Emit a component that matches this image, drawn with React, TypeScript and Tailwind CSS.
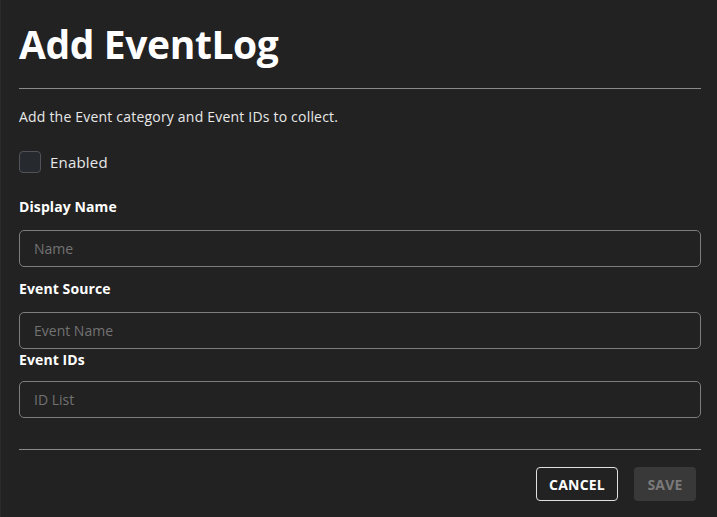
import React from "react";

export default function App() {
  const font = { fontFamily: '"Open Sans", "Noto Sans", sans-serif' };
  return (
    <div className="w-[717px] h-[517px] bg-[#222222] text-white overflow-hidden border-l border-[#2c2c2c]" style={font}>
      <div className="pl-[18px] pr-[16px]">
        <h1 className="text-[39px] font-bold leading-none pt-[24px] h-[88px] tracking-[-0.4px]">Add EventLog</h1>
        <div className="h-px bg-[#8a8a8a]" />
        <p className="text-[14px] text-[#e8e8e8] mt-[19px] leading-[18px] tracking-[0.2px]">Add the Event category and Event IDs to collect.</p>
        <label className="flex items-center gap-[9px] mt-[25px] h-[22px]">
          <span className="w-[22px] h-[22px] rounded-[4px] border border-[#505458] bg-[#262a2e]" />
          <span className="text-[15px] text-[#e8e8e8] tracking-[0.2px]">Enabled</span>
        </label>
        <div className="text-[14px] font-bold mt-[25px] leading-[18px] tracking-[0.1px]">Display Name</div>
        <input
          placeholder="Name"
          className="mt-[14px] block w-full h-[37px] rounded-[5px] border border-[#7d7d7d] bg-transparent px-[14px] text-[14px] placeholder:text-[#727272] outline-none"
          style={font}
        />
        <div className="text-[14px] font-bold mt-[13px] leading-[18px] tracking-[0.1px]">Event Source</div>
        <input
          placeholder="Event Name"
          className="mt-[14px] block w-full h-[37px] rounded-[5px] border border-[#7d7d7d] bg-transparent px-[14px] text-[14px] placeholder:text-[#727272] outline-none"
          style={font}
        />
        <div className="text-[14px] font-bold mt-[2px] leading-[18px] tracking-[0.1px]">Event IDs</div>
        <input
          placeholder="ID List"
          className="mt-[12px] block w-full h-[37px] rounded-[5px] border border-[#7d7d7d] bg-transparent px-[14px] text-[14px] placeholder:text-[#727272] outline-none"
          style={font}
        />
        <div className="h-px bg-[#8a8a8a] mt-[31px]" />
        <div className="flex justify-end gap-[16px] mt-[17px] pr-[5px]">
          <button className="w-[82px] h-[34px] rounded-[4px] border border-[#e0e0e0] text-[14px] font-bold text-white tracking-[0.2px]" style={font}>CANCEL</button>
          <button className="w-[62px] h-[34px] rounded-[4px] bg-[#393939] text-[14px] font-bold text-[#7a7a7a] tracking-[0.2px]" style={font}>SAVE</button>
        </div>
      </div>
    </div>
  );
}
